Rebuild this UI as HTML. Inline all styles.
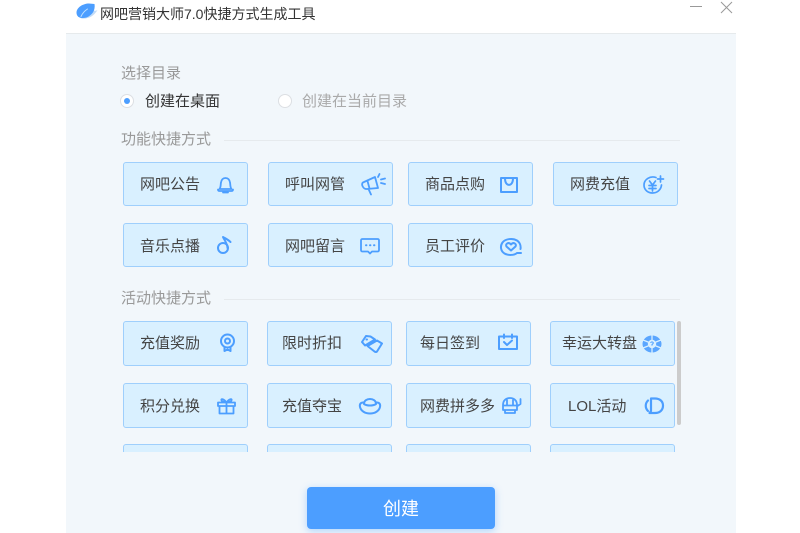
<!DOCTYPE html>
<html lang="zh">
<head>
<meta charset="utf-8">
<title>网吧营销大师7.0快捷方式生成工具</title>
<style>
html,body{margin:0;padding:0;width:800px;height:533px;overflow:hidden;background:#fff}
body{position:relative;font-family:"Liberation Sans","Noto Sans CJK SC",sans-serif;color:#444}
#w{position:absolute;left:0;top:0;width:800px;height:533px;overflow:hidden;background:#fff;filter:blur(.35px)}
.a{position:absolute}
.t{position:absolute;white-space:nowrap;line-height:20px;height:20px;font-size:15px}
.panel{position:absolute;left:66px;top:33px;width:670px;height:500px;background:#f2f7fb;border-top:1px solid #e6eaec;box-sizing:border-box}
.b{position:absolute;box-sizing:border-box;width:125px;height:45px;background:#d9f0ff;border:1px solid #9fcffc;border-radius:3px}
.h44{height:44px}
.lab{color:#999}
.line{position:absolute;height:1px;background:#e6eaed;left:224px;width:456px}
svg{position:absolute;overflow:visible;fill:none;stroke:#4c9eff;stroke-width:1.8;stroke-linecap:round;stroke-linejoin:round}
.clip{position:absolute;left:66px;top:310px;width:670px;height:142px;overflow:hidden}
</style>
</head>
<body>
<div id="w">
<!-- title bar -->
<svg style="left:76px;top:3px" width="22" height="16" viewBox="0 0 22 16">
<path d="M5 15.500C12 16.500 18 13 21.500 7C19.500 8 18.500 8 17.500 7L8 12Z" fill="#c3dcf7" stroke="none"/>
<path d="M0.500 9.500C0.500 4.500 7 0.500 13 0.500L18.500 1C19.500 7 16.500 12 10.500 14.500C5 16 0.500 14.500 0.500 9.500Z" fill="#4c9eff" stroke="none"/>
<path d="M5 13.500C6.500 10 8.500 8 11.500 6" stroke="#bfe0ff" stroke-width="1"/>
</svg>
<div class="t" style="left:100px;top:4px;font-size:14px;color:#333">网吧营销大师7.0快捷方式生成工具</div>
<div class="a" style="left:690px;top:6px;width:12px;height:1px;background:#999"></div>
<svg style="left:721px;top:2px;stroke:#999;stroke-width:1;stroke-linecap:butt" width="11" height="11" viewBox="0 0 11 11"><path d="M0 0L11 11M11 0L0 11"/></svg>

<div class="panel"></div>

<div class="t lab" style="left:121px;top:64px">选择目录</div>
<div class="a" style="left:120px;top:94px;width:14px;height:14px;box-sizing:border-box;border:1px solid #dcdfe3;border-radius:50%;background:#fff"></div>
<div class="a" style="left:124px;top:98px;width:6px;height:6px;border-radius:50%;background:#4c9eff"></div>
<div class="t" style="left:145px;top:92px;color:#333">创建在桌面</div>
<div class="a" style="left:278px;top:94px;width:14px;height:14px;box-sizing:border-box;border:1px solid #dcdfe3;border-radius:50%;background:#fff"></div>
<div class="t" style="left:302px;top:92px;color:#aaa">创建在当前目录</div>

<div class="t lab" style="left:121px;top:130px">功能快捷方式</div>
<div class="line" style="top:140px"></div>

<div class="b h44" style="left:123px;top:162px"></div><div class="t" style="left:140px;top:175px">网吧公告</div>
<div class="b h44" style="left:268px;top:162px"></div><div class="t" style="left:285px;top:175px">呼叫网管</div>
<div class="b h44" style="left:408px;top:162px"></div><div class="t" style="left:425px;top:175px">商品点购</div>
<div class="b h44" style="left:553px;top:162px"></div><div class="t" style="left:570px;top:175px">网费充值</div>
<div class="b h44" style="left:123px;top:223px"></div><div class="t" style="left:140px;top:237px">音乐点播</div>
<div class="b h44" style="left:268px;top:223px"></div><div class="t" style="left:285px;top:237px">网吧留言</div>
<div class="b h44" style="left:408px;top:223px"></div><div class="t" style="left:425px;top:237px">员工评价</div>

<!-- bell -->
<svg style="left:217px;top:176px" width="17" height="17" viewBox="0 0 17 17"><path d="M2.500 13C4 11 3.500 8.500 4 6.500C4.500 3.500 6 2 8.500 2C11 2 12.500 3.500 13 6.500C13.500 8.500 13 11 14.500 13ZM1 13.500Q1 15 2.500 15H14.500Q16 15 16 13.500M6 16.500H11"/></svg>
<!-- horn -->
<svg style="left:360px;top:173px" width="26" height="23" viewBox="0 0 26 23"><path d="M4 9L15 4L18 15L7 16C3 16.500 0 10 4 9ZM7.500 8L9.500 15.500M8.500 16L11 21.500M19.500 1L18 4M21 6.500L25 5.500M21 10L25 11"/></svg>
<!-- bag -->
<svg style="left:500px;top:177px;stroke-width:2" width="18" height="16" viewBox="0 0 18 16"><path d="M1 1H17V15H1ZM5 1.500C5 10 13 10 13 1.500"/></svg>
<!-- yen -->
<svg style="left:643px;top:175px;stroke-width:1.700" width="21" height="19" viewBox="0 0 21 19"><path d="M13 2.500C7 0.500 1 4.500 1 10C1 15 5 18 9.500 18C14 18 18 15 18.500 10M6.500 6L9.500 10L12.500 6M6 10.500H13M6 13.500H13M9.500 10V16M17.500 1V7M14.500 4H20.500"/></svg>
<!-- note -->
<svg style="left:217px;top:236px;stroke-width:2" width="15" height="18" viewBox="0 0 15 18"><circle cx="6" cy="12" r="5"/><path d="M10.500 12C10.500 8 8 5 6 1C8.500 2.500 11 3.500 13.500 6"/></svg>
<!-- chat -->
<svg style="left:360px;top:238px" width="20" height="17" viewBox="0 0 20 17"><path d="M2.500 1H17.500Q19 1 19 2.500V12Q19 13.500 17.500 13.500H12L10 15.500L8 13.500H2.500Q1 13.500 1 12V2.500Q1 1 2.500 1Z"/><path d="M6 7.300H6.400M10 7.300H10.400M14 7.300H14.400" stroke-width="2"/></svg>
<!-- heart -->
<svg style="left:500px;top:238px;stroke-width:2" width="22" height="18" viewBox="0 0 22 18"><path d="M17 15C14 17.500 8 17.500 4.500 15.500C0.500 13 0 8 2.500 4.500C5.500 0.500 13 0 17 2.500C20 4.500 21 8 20.500 11"/><path d="M11 12.500L6.500 8.500C5 6 8.500 3.500 11 6.500C13.500 3.500 17 6 15.500 8.500ZM17.500 15H21"/></svg>

<div class="t lab" style="left:121px;top:289px">活动快捷方式</div>
<div class="line" style="top:299px"></div>

<div class="clip">
<div class="b" style="left:57px;top:11px"></div>
<div class="b" style="left:201px;top:11px"></div>
<div class="b" style="left:340px;top:11px"></div>
<div class="b" style="left:484px;top:11px"></div>
<div class="b" style="left:57px;top:73px"></div>
<div class="b" style="left:201px;top:73px"></div>
<div class="b" style="left:340px;top:73px"></div>
<div class="b" style="left:484px;top:73px"></div>
<div class="b" style="left:57px;top:134px"></div>
<div class="b" style="left:201px;top:134px"></div>
<div class="b" style="left:340px;top:134px"></div>
<div class="b" style="left:484px;top:134px"></div>
</div>
<div class="a" style="left:677px;top:321px;width:4px;height:104px;background:#ccc;border-radius:2px"></div>

<div class="t" style="left:140px;top:334px">充值奖励</div>
<div class="t" style="left:282px;top:334px">限时折扣</div>
<div class="t" style="left:420px;top:334px">每日签到</div>
<div class="t" style="left:562px;top:334px">幸运大转盘</div>
<div class="t" style="left:140px;top:397px">积分兑换</div>
<div class="t" style="left:282px;top:397px">充值夺宝</div>
<div class="t" style="left:420px;top:397px">网费拼多多</div>
<div class="t" style="left:568px;top:397px">LOL活动</div>

<!-- medal -->
<svg style="left:219px;top:334px;stroke-width:2" width="17" height="18" viewBox="0 0 17 18"><circle cx="8.500" cy="7" r="6.500"/><circle cx="8.500" cy="7" r="2.500"/><path d="M5.500 13.500V17L8.500 15.500L11.500 17V13.500"/></svg>
<!-- tag -->
<svg style="left:361px;top:335px;stroke-width:2" width="22" height="18" viewBox="0 0 22 18"><path d="M5 1L9.500 1.500L14 4.500L4 10.500L1 7ZM5.500 4.500H6M6.500 11L16 5.500L21 8.500L16 16.500Q15 17.500 13.500 16.500Z"/></svg>
<!-- calendar -->
<svg style="left:498px;top:334px;stroke-width:2" width="20" height="16" viewBox="0 0 20 16"><path d="M1 2.500H19V15H1ZM6 0.500V4M14 0.500V4M6 8L9 11L14 6.500"/></svg>
<!-- wheel -->
<svg style="left:642px;top:335px" width="20" height="18" viewBox="0 0 20 18"><ellipse cx="10" cy="9" rx="9.500" ry="8.500" fill="#5aa6ff" stroke="none"/><ellipse cx="10" cy="9" rx="4.200" ry="4.200" fill="#d9f0ff" stroke="none"/><path d="M10 0V5M10 13V18M1 5L6 7M14 11L19 13M1 13L6 11M14 7L19 5" stroke="#d9f0ff" stroke-width="1.300"/><path d="M8.800 7.500Q10 6.200 11.200 7.500Q11.500 8.700 10 9.500V10.200" stroke-width="1"/></svg>
<!-- gift -->
<svg style="left:217px;top:398px" width="19" height="16" viewBox="0 0 19 16"><path d="M1 4.500H18V8H1ZM2.500 8V15.500H16.500V8M9.500 4.500V15.500M9.500 4.500C7 1 3.500 0 4.500 2.500C5 3.500 7 4.500 9.500 4.500C12 4.500 14 3.500 14.500 2.500C15.500 0 12 1 9.500 4.500"/></svg>
<!-- ingot -->
<svg style="left:359px;top:398px;stroke-width:2" width="22" height="16" viewBox="0 0 22 16"><path d="M5 4.500C1 4 0.500 7 1 9C2 13 6 15.500 11 15.500C16 15.500 20 13 21 9C21.500 7 21 4 17 4.500"/><path d="M5 6C5 2.500 8 1 11 1C14 1 17 2.500 17 6C14 8 8 8 5 6Z"/></svg>
<!-- slot -->
<svg style="left:502px;top:397px" width="20" height="17" viewBox="0 0 20 17"><path d="M1 13V8C1 3.500 4 1 8 1C12 1 15 3.500 15 8V13ZM1 8.500H15M5 3V8M11 3V8M3 16H13V13M3 16V13M18.500 2V7L15.500 9"/></svg>
<!-- LoL -->
<svg style="left:645px;top:397px;stroke-width:2.200" width="19" height="17" viewBox="0 0 19 17"><path d="M6 1.500H10C15 1.500 18 4.500 18 8.500C18 13 15 16 10 16H4.500L6 14Z"/><path d="M3 3.500C0 6.500 0 11 3 14"/></svg>

<!-- create button -->
<div class="a" style="left:307px;top:487px;width:188px;height:42px;background:#4c9eff;border-radius:4px;box-shadow:0 2px 8px rgba(76,158,255,.4);color:#fff;font-size:18px;line-height:44px;text-align:center">创建</div>
</div>
</body>
</html>
